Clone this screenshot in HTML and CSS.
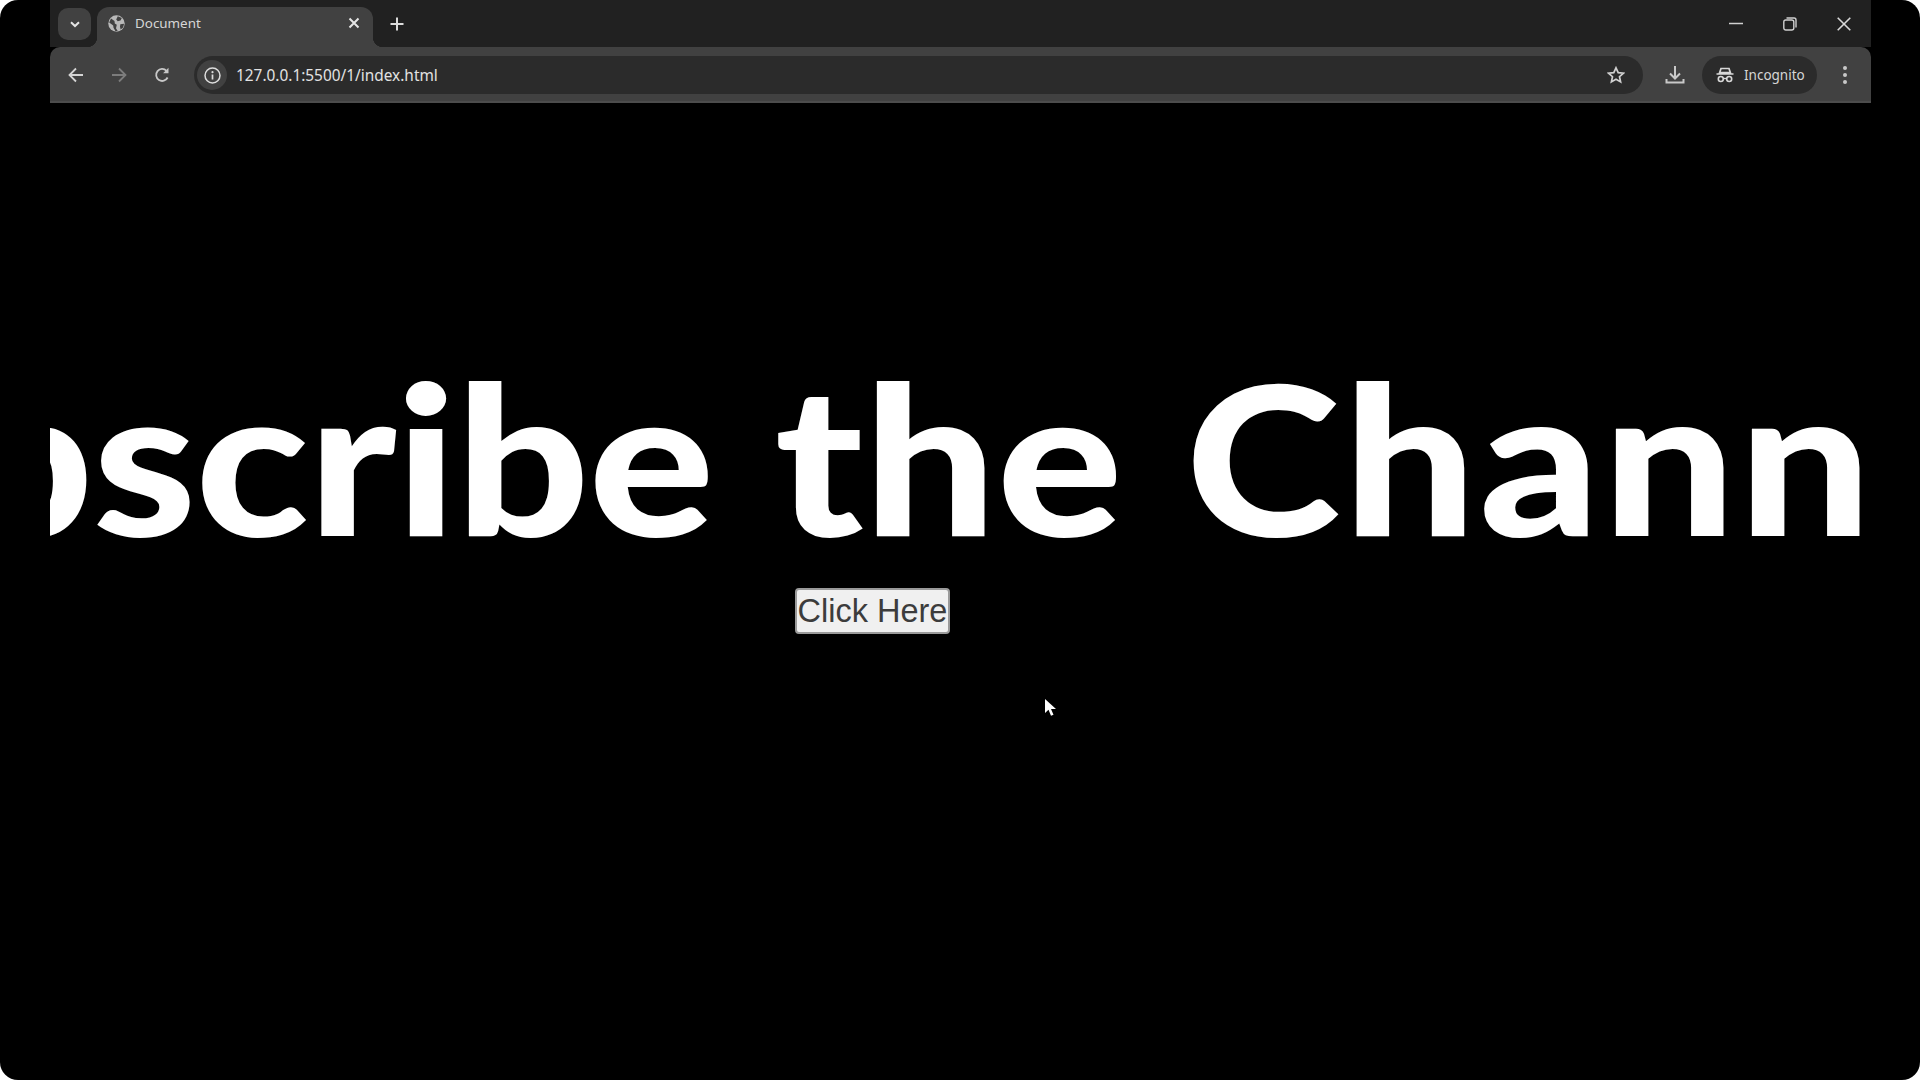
FILE: index.html
```html
<!DOCTYPE html>
<html lang="en">
<head>
    <meta charset="UTF-8">
    <meta name="viewport" content="width=device-width, initial-scale=1.0">
    <title>Document</title>
    <link rel="stylesheet" href="styles.css">
</head>
<body>
    <div class="screen">
        <div class="window">
            <div class="tabstrip">
                <div class="tab-search">
                    <svg width="14" height="14" viewBox="0 0 14 14"><path d="M3 5.2 7 9l4-3.8" fill="none" stroke="#e4e4e4" stroke-width="2"/></svg>
                </div>
                <div class="tab">
                    <svg class="favicon" width="17" height="17" viewBox="0 0 17 17"><circle cx="8.5" cy="8.5" r="8.2" fill="#b9b9b9"/><path d="M3 3.5 6.5 6l.3 2.6 2 1.2-.8 3.4 1.7 2.8-2.2.3-2-3.500-.3-2.400L1.200 7.500ZM9.800 1.200 13.800 3l-1.300 2.600-2.800.6-1.500-1.700ZM12.300 9.300l3.800-.5-1 3.600-2.500 2.200-.6-2.800Z" fill="#414141"/></svg>
                    <span class="tab-title">Document</span>
                    <svg class="tab-close" width="12" height="12" viewBox="0 0 12 12"><path d="M1.500 1.500l9 9m0-9-9 9" stroke="#e6e6e6" stroke-width="2"/></svg>
                </div>
                <svg class="new-tab" width="14" height="14" viewBox="0 0 14 14"><path d="M7 .5v13M.5 7h13" stroke="#dcdcdc" stroke-width="2"/></svg>
                <div class="window-btns">
                    <svg width="14" height="14" viewBox="0 0 14 14"><path d="M0 6.500h14" stroke="#d0d0d0" stroke-width="1.500"/></svg>
                    <svg width="14" height="14" viewBox="0 0 14 14"><rect x=".8" y="3" width="10" height="10" rx="2" fill="none" stroke="#d0d0d0" stroke-width="1.400"/><path d="M3.500 1h7.500a2 2 0 0 1 2 2v7.500" fill="none" stroke="#d0d0d0" stroke-width="1.400"/></svg>
                    <svg width="14" height="14" viewBox="0 0 14 14"><path d="M.7.700l12.600 12.600m0-12.600L.7 13.300" stroke="#d8d8d8" stroke-width="1.600"/></svg>
                </div>
            </div>
            <div class="toolbar">
                <div class="nav-btns">
                    <svg width="16" height="16" viewBox="0 0 16 16"><path d="M15 8H2m6-6.500L1.500 8 8 14.500" fill="none" stroke="#d4d4d4" stroke-width="1.800"/></svg>
                    <svg width="16" height="16" viewBox="0 0 16 16"><path d="M1 8h13M8 1.500 14.500 8 8 14.500" fill="none" stroke="#7c7c7c" stroke-width="1.800"/></svg>
                    <svg width="16" height="16" viewBox="0 0 16 16"><path d="M13.600 10.500A6 6 0 1 1 12.500 3.800" fill="none" stroke="#c8c8c8" stroke-width="1.800"/><path d="M14.500.8v5.400H9.100Z" fill="#c8c8c8"/></svg>
                </div>
                <div class="omnibox">
                    <div class="site-info">
                        <svg width="17" height="17" viewBox="0 0 17 17"><circle cx="8.500" cy="8.500" r="7.500" fill="none" stroke="#dcdcdc" stroke-width="1.500"/><path d="M8.500 7.500v5" stroke="#dcdcdc" stroke-width="1.700"/><circle cx="8.500" cy="5.200" r="1.100" fill="#dcdcdc"/></svg>
                    </div>
                    <span class="url">127.0.0.1:5500/1/index.html</span>
                    <svg class="star" width="18" height="18" viewBox="0 0 18 18"><path d="M9 1.800l2.200 4.800 5.200.6-3.900 3.500 1.100 5.200L9 13.300l-4.600 2.600 1.100-5.200-3.900-3.500 5.200-.6Z" fill="none" stroke="#d0d0d0" stroke-width="1.700"/></svg>
                </div>
                <svg class="download" width="20" height="20" viewBox="0 0 20 20"><path d="M10 1v12M5 8.500l5 5 5-5M1.500 14v3.500h17V14" fill="none" stroke="#c8c8c8" stroke-width="2"/></svg>
                <div class="profile">
                    <svg width="18" height="16" viewBox="0 0 18 16"><path d="M5 1.500h8l1.300 4H3.700ZM.5 7h17" fill="none" stroke="#d8d8d8" stroke-width="1.700"/><circle cx="4.800" cy="12" r="2.500" fill="none" stroke="#d8d8d8" stroke-width="1.600"/><circle cx="13.200" cy="12" r="2.500" fill="none" stroke="#d8d8d8" stroke-width="1.600"/><path d="M7.300 11.500h3.400" stroke="#d8d8d8" stroke-width="1.400"/></svg>
                    <span>Incognito</span>
                </div>
                <div class="menu-dots"><i></i><i></i><i></i></div>
            </div>
            <div class="page">
                <h1 class="big-text"><span class="word-first">Subscribe</span> <span class="word-mid">the</span> <span class="word-last">Channel</span></h1>
                <button class="click-btn">Click Here</button>
            </div>
        </div>
        <svg class="cursor" width="13" height="20" viewBox="0 0 13 20"><path d="M1 1v14l3.500-3.200 2.500 6 2.500-1-2.500-5.800H12Z" fill="#fff"/></svg>
    </div>
</body>
</html>
```

FILE: styles.css
```css
* {
    box-sizing: border-box;
}
html, body {
    margin: 0;
    height: 100%;
    background: #fff;
    overflow: hidden;
}
.screen {
    position: relative;
    width: 1920px;
    height: 1080px;
    padding: 0 49px 0 50px;
    background: #000;
    border-radius: 18px;
    overflow: hidden;
}
.window {
    display: flex;
    flex-direction: column;
    height: 100%;
    font-family: "Noto Sans", "Open Sans", sans-serif;
}

/* tab strip */
.tabstrip {
    display: flex;
    align-items: flex-end;
    height: 47px;
    padding-left: 8px;
    background: #212121;
}
.tab-search {
    display: flex;
    align-items: center;
    justify-content: center;
    width: 33px;
    height: 32px;
    margin-bottom: 7px;
    border-radius: 10px;
    background: #414141;
}
.tab {
    position: relative;
    display: flex;
    align-items: center;
    width: 276px;
    height: 40px;
    margin-left: 6px;
    padding: 0 13px 8px 11px;
    border-radius: 12px 12px 0 0;
    background: #414141;
}
.tab::before, .tab::after {
    content: "";
    position: absolute;
    bottom: 0;
    width: 10px;
    height: 10px;
}
.tab::before {
    left: -10px;
    background: radial-gradient(circle at 0 0, transparent 10px, #414141 10.500px);
}
.tab::after {
    right: -10px;
    background: radial-gradient(circle at 100% 0, transparent 10px, #414141 10.500px);
}
.tab-title {
    flex: 1;
    margin-left: 10px;
    font-size: 13.400px;
    color: #d6d6d6;
}
.new-tab {
    margin: 0 0 16px 17px;
}
.window-btns {
    display: flex;
    gap: 40px;
    margin: 0 20px 16px auto;
    align-items: center;
}

/* toolbar */
.toolbar {
    display: flex;
    align-items: center;
    height: 56px;
    padding: 2px 0 0 18px;
    border-radius: 10px 10px 0 0;
    background: #414141;
    border-bottom: 2px solid #4c4c4c;
}
.nav-btns {
    display: flex;
    gap: 27px;
    width: 126px;
}
.omnibox {
    display: flex;
    align-items: center;
    width: 1449px;
    height: 38px;
    padding: 0 18px 0 3px;
    border-radius: 19px;
    background: #2b2b2b;
}
.site-info {
    display: flex;
    align-items: center;
    justify-content: center;
    width: 30px;
    height: 30px;
    border-radius: 50%;
    background: #414141;
}
.url {
    flex: 1;
    margin-left: 9px;
    font-size: 15.400px;
    color: #e2e2e2;
}
.download {
    margin-left: 22px;
}
.profile {
    display: flex;
    align-items: center;
    gap: 10px;
    width: 115px;
    height: 38px;
    margin-left: 17px;
    padding-left: 14px;
    border-radius: 19px;
    background: #2b2b2b;
    font-size: 13.500px;
    color: #d6d6d6;
}
.menu-dots {
    display: flex;
    flex-direction: column;
    gap: 3px;
    margin-left: 26px;
}
.menu-dots i {
    display: block;
    width: 4px;
    height: 4px;
    border-radius: 50%;
    background: #c8c8c8;
}

/* page */
.page {
    flex: 1;
    overflow: hidden;
    background: #000;
}
.big-text {
    margin: 243px 0 0 -349px;
    height: 220px;
    line-height: 220px;
    font-family: Lato, sans-serif;
    font-size: 208px;
    font-weight: 900;
    color: #fff;
    white-space: nowrap;
    transform: scaleX(1.13);
    transform-origin: left center;
}
.word-first {
    letter-spacing: -1px;
}
.word-mid {
    margin-left: 5px;
}
.word-last {
    margin-left: 6px;
    letter-spacing: 2.500px;
}
.click-btn {
    display: block;
    width: 155px;
    height: 46px;
    margin: 22px 0 0 745px;
    padding: 0;
    border: 2px solid #9a9a9a;
    border-radius: 4px;
    background: #f0f0f0;
    font-family: "Liberation Sans", Arial, sans-serif;
    font-size: 32.500px;
    color: #3c3c3c;
}
.cursor {
    position: absolute;
    left: 1044px;
    top: 698px;
}
```
